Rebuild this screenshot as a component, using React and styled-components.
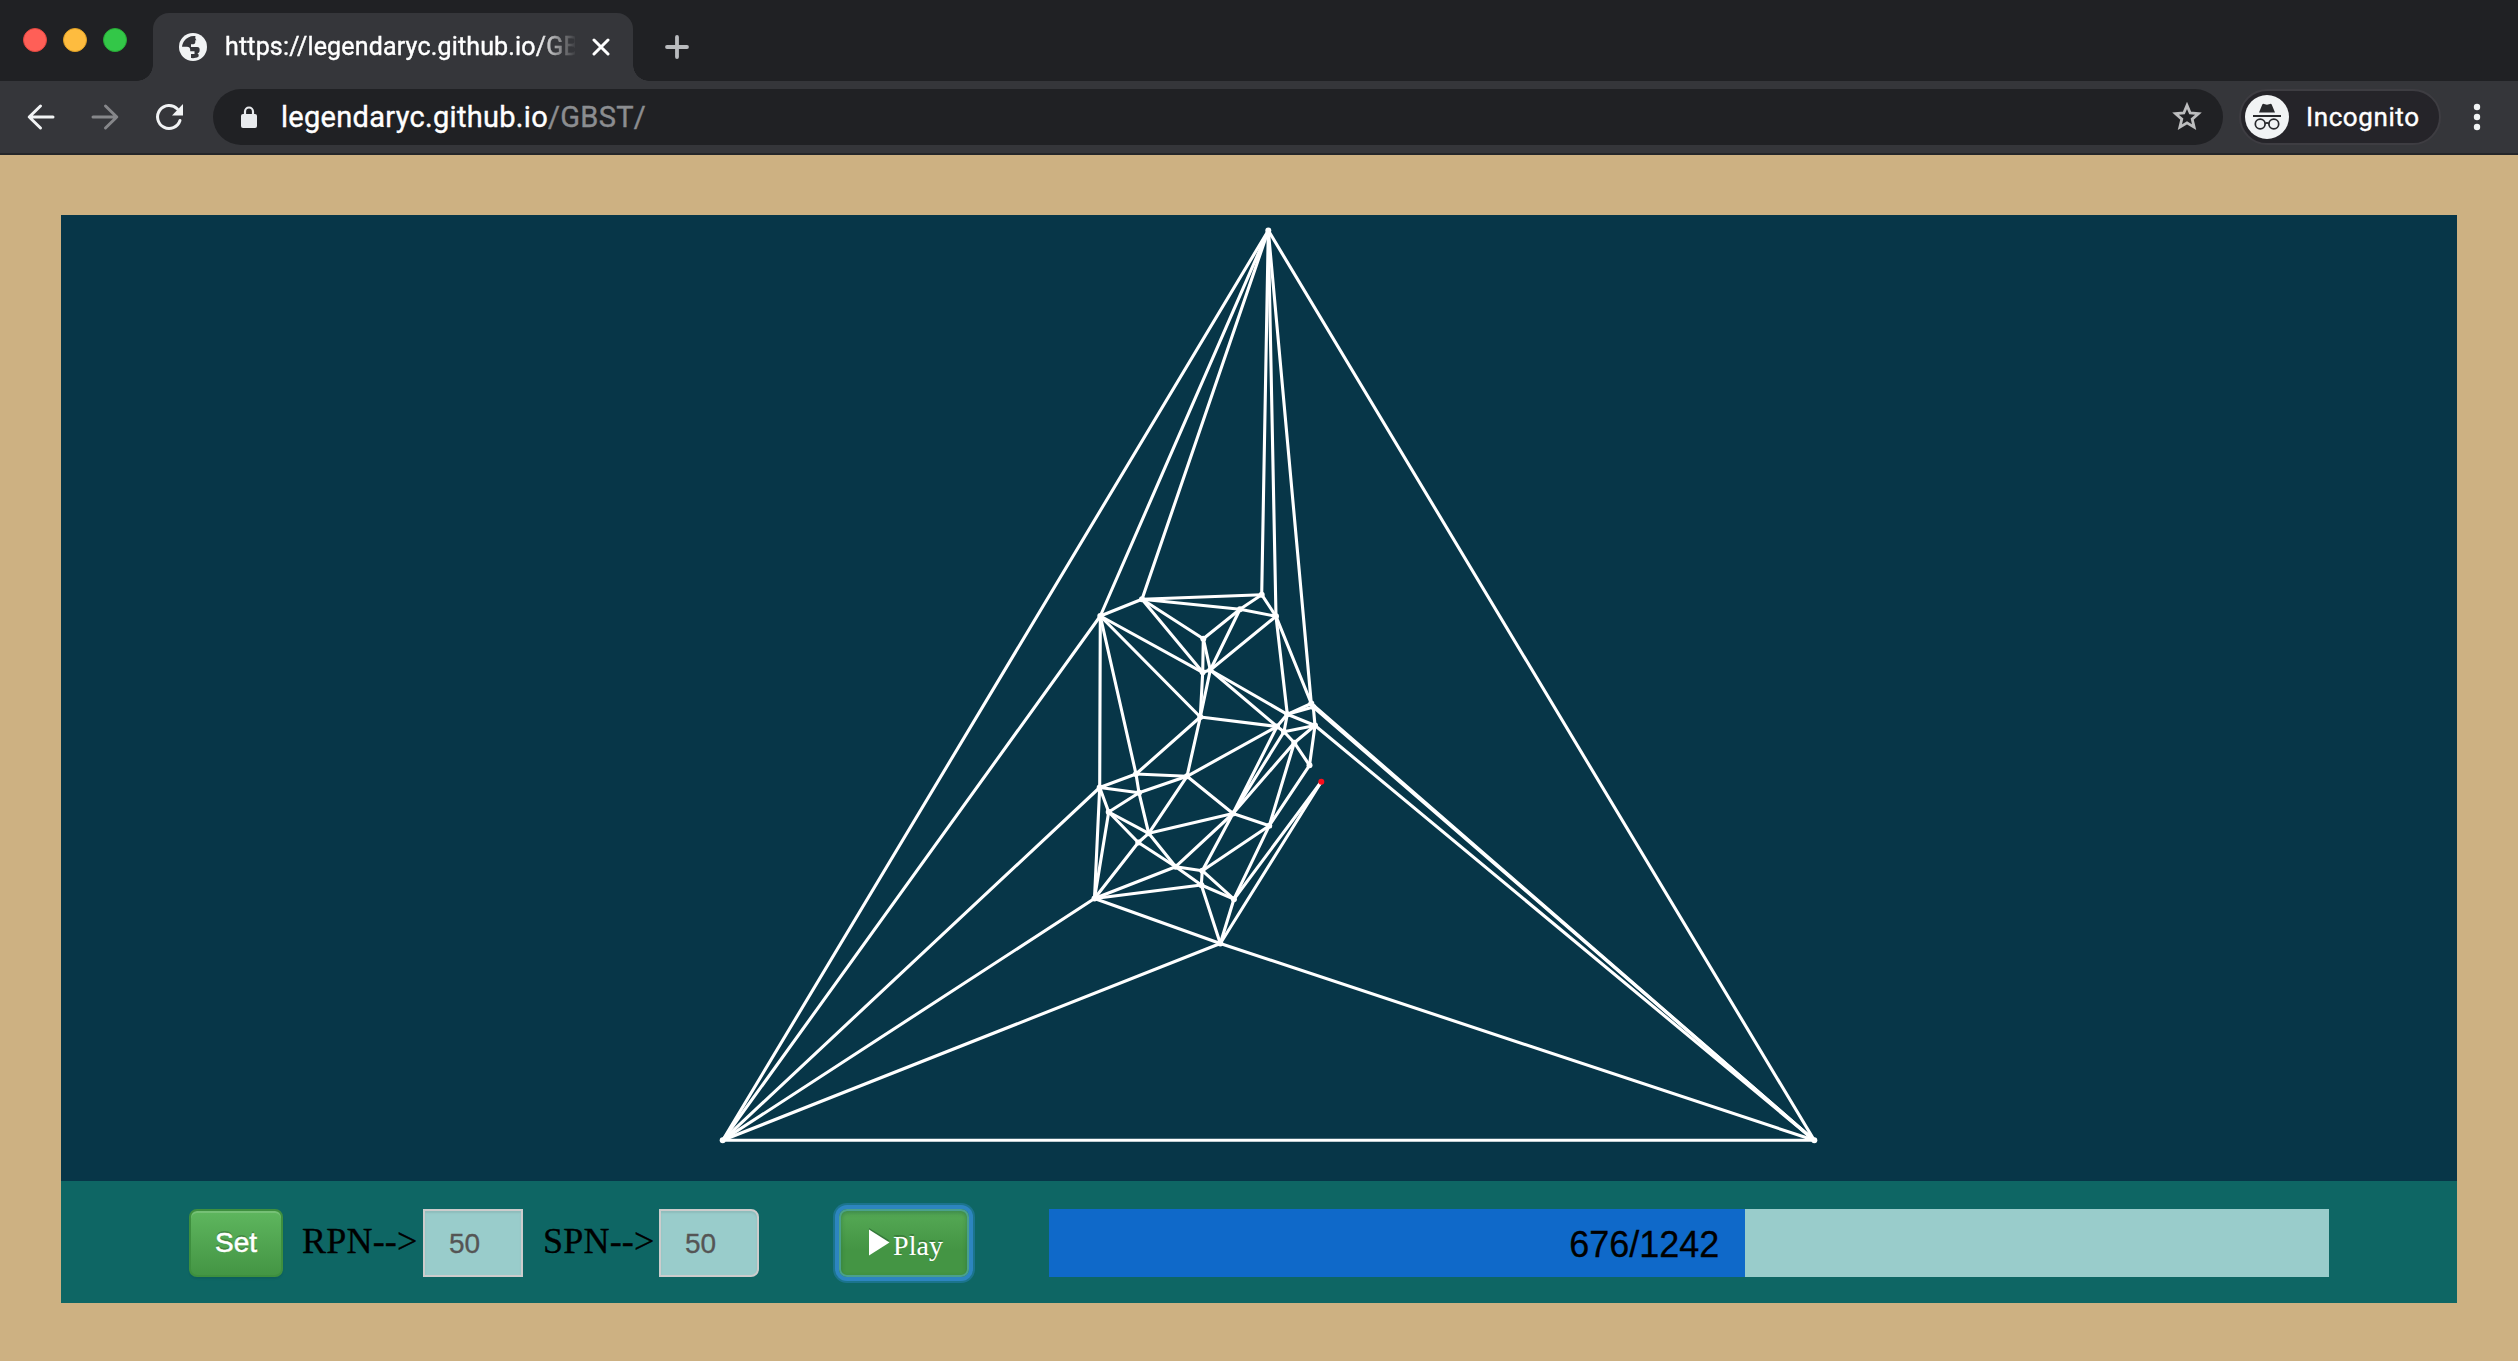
import React from "react";
import styled, { createGlobalStyle } from "styled-components";

const GlobalStyle = createGlobalStyle`
  *, *::before, *::after { box-sizing: border-box; }
  body { margin: 0; background: #cdb182; }
  svg { display: block; flex: none; }
`;

const Window = styled.div`
  width: 2518px;
  height: 1361px;
  display: flex;
  flex-direction: column;
  overflow: hidden;
  background: #cdb182;
`;

const TabStrip = styled.header`
  height: 81px;
  display: flex;
  align-items: flex-end;
  background: #202124;
  font-family: Roboto, "Liberation Sans", sans-serif;
`;

const Lights = styled.div`
  width: 153px;
  height: 81px;
  padding: 28px 0 0 23px;
  display: flex;
  gap: 16px;
`;

const Light = styled.span`
  width: 24px;
  height: 24px;
  border-radius: 50%;
  background: ${(p) => p.$fill};
  border: 1px solid ${(p) => p.$edge};
`;

const Tab = styled.div`
  position: relative;
  width: 480px;
  height: 68px;
  padding: 0 20px 0 26px;
  display: flex;
  align-items: center;
  border-radius: 16px 16px 0 0;
  background: #35363a;
  &::before, &::after {
    content: "";
    position: absolute;
    bottom: 0;
    width: 16px;
    height: 16px;
  }
  &::before {
    left: -16px;
    background: radial-gradient(circle at 0 0, #202124 15.5px, #35363a 16px);
  }
  &::after {
    right: -16px;
    background: radial-gradient(circle at 100% 0, #202124 15.5px, #35363a 16px);
  }
`;

const TabTitle = styled.span`
  width: 350px;
  margin: 0 17px 0 18px;
  overflow: hidden;
  white-space: nowrap;
  font-size: 25px;
  line-height: 34px;
  letter-spacing: 0.17px;
  color: #fff;
  -webkit-text-stroke: 0.4px currentColor;
  mask-image: linear-gradient(to right, #000 312px, transparent 352px);
`;

const NewTab = styled.div`
  width: 88px;
  height: 68px;
  display: flex;
  align-items: center;
  justify-content: center;
`;

const Toolbar = styled.nav`
  height: 74px;
  display: flex;
  align-items: center;
  padding: 0 25px 2px 24px;
  background: #35363a;
  box-shadow: inset 0 -2px 0 #252629;
  font-family: Roboto, "Liberation Sans", sans-serif;
`;

const NavIcons = styled.div`
  width: 189px;
  display: flex;
  gap: 30px;
`;

const Omnibox = styled.div`
  width: 2010px;
  height: 56px;
  padding: 0 20px 0 26px;
  display: flex;
  align-items: center;
  border-radius: 28px;
  background: #202124;
`;

const Url = styled.span`
  flex: 1;
  margin-left: 22px;
  font-size: 29px;
  line-height: 38px;
  letter-spacing: 0.3px;
  color: #fff;
  white-space: nowrap;
  -webkit-text-stroke: 0.4px currentColor;
`;

const Path = styled.span`
  color: #8b8d90;
`;

const Incognito = styled.div`
  width: 202px;
  height: 56px;
  margin: 0 20px 0 16px;
  padding: 0 0 0 4px;
  display: flex;
  align-items: center;
  gap: 17px;
  border: 2px solid #3e3d42;
  border-radius: 28px;
  background: #252429;
  color: #fff;
  font-size: 26px;
  letter-spacing: 0.6px;
  -webkit-text-stroke: 0.4px currentColor;
`;

const Page = styled.main`
  flex: 1;
  padding: 60px 61px 58px;
`;

const Board = styled.section`
  background: #073648;
`;

const Controls = styled.footer`
  height: 122px;
  display: flex;
  align-items: flex-start;
  padding: 28px 128px 0;
  background: #0e6664;
  font-family: "Liberation Sans", Arial, sans-serif;
`;

const Button = styled.button`
  width: ${(p) => p.$width}px;
  height: 68px;
  padding: 0;
  display: flex;
  align-items: center;
  justify-content: center;
  gap: 3px;
  border: 2px solid #3e8f3e;
  border-radius: 8px;
  background: linear-gradient(#5eb65e, #449544);
  box-shadow: inset 0 2px 0 rgba(255, 255, 255, 0.15), 0 2px 2px rgba(0, 0, 0, 0.075);
  color: #fff;
  font: 28px/40px "Liberation Sans", Arial, sans-serif;
  text-shadow: 0 -2px 0 rgba(0, 0, 0, 0.2);
  -webkit-text-stroke: 0.5px #fff;
`;

const PlayButton = styled(Button)`
  margin-left: 80px;
  padding-left: 4px;
  border-color: #4aa08c;
  background: linear-gradient(#55a955, #449544 60%);
  box-shadow: 0 0 0 4px #2d85bf, 0 0 0 6px rgba(45, 133, 191, 0.45), inset 0 2px 4px rgba(0, 60, 50, 0.3);
  font-family: "Liberation Serif", "Times New Roman", serif;
  -webkit-text-stroke: 0;
`;

const PlayLabel = styled.span`
  padding-top: 5px;
`;

const Label = styled.label`
  width: ${(p) => p.$width}px;
  padding-left: ${(p) => p.$indent}px;
  font: 36px/64px "Liberation Serif", "Times New Roman", serif;
  letter-spacing: 0.2px;
  white-space: nowrap;
  color: #000;
  -webkit-text-stroke: 0.3px #000;
`;

const NumberBox = styled.div`
  width: 100px;
  height: 68px;
  padding-left: 24px;
  border: 2px solid #ccc;
  border-radius: ${(p) => (p.$last ? "0 8px 8px 0" : "0")};
  background: #99cccb;
  box-shadow: inset 0 2px 2px rgba(0, 0, 0, 0.075);
  color: #555;
  font-size: 28px;
  line-height: 66px;
  -webkit-text-stroke: 0.3px #555;
`;

const Progress = styled.div`
  width: 1280px;
  height: 68px;
  margin-left: 80px;
  background: #99cccb;
`;

const ProgressFill = styled.div`
  height: 68px;
  padding-right: 26px;
  background: #0f69c9;
  color: #000;
  text-align: right;
  font-size: 36px;
  line-height: 71px;
  -webkit-text-stroke: 0.3px #000;
`;

const points = {
  T: [1268.3, 230.5], L: [722.7, 1140.3], R: [1814.3, 1140.3],
  A: [1100.3, 616], B: [1142, 599.3], C: [1261.7, 594.7], D: [1240, 609.3],
  E: [1276, 616.3], F: [1203.3, 638.7], G: [1202.7, 672.3], H: [1210.3, 670],
  I: [1200.3, 717], J: [1287.3, 714.3], K: [1311.3, 703.5], S: [1313.3, 707],
  M: [1315, 725.5], N: [1277, 726.5], O: [1284, 731.7], P: [1294.3, 742.7],
  Q: [1309.5, 765.3], U: [1136, 774], V: [1187, 776.3], W: [1099.7, 787.5],
  X: [1139, 792.8], Y: [1108.7, 812], Z: [1148.7, 833.3], a: [1138.3, 842.5],
  b: [1233, 813.5], c: [1269.3, 825.7], d: [1175.7, 866.7], e: [1202.3, 870.7],
  f: [1201.3, 885], g: [1233.9, 899.2], h: [1220.3, 943.5], i: [1094.5, 898.5],
  z: [1321.3, 781.7],
};

const edges = (
  "TL TR LR TA TB TC TE TK AL WL iL hL hR ih KR SR MR AB AW AU AI AG BC BD DE BF BG " +
  "CD DF CE DH EH FG FH GH GI HI EJ EK HJ HN IN IU IV NJ JM JK JS JO NO OM OP PM PQ MQ " +
  "KS SM NV Nb Ob Pb Pc Qc zh zg cb ce cg bV bZ bd be VU VX VZ WU WX WY Wi UX XZ XY Yi " +
  "YZ Ya Za ai Zd ad di de df ef eg fg fi fh gh"
).split(" ");

const ACTIVE = "z";
const step = 676;
const total = 1242;

function Triangulation() {
  return (
    <svg width="2396" height="966" viewBox="61 215 2396 966">
      <g stroke="#fff" strokeWidth="3.1" strokeLinecap="round">
        {edges.map(([s, t]) => (
          <line key={s + t} x1={points[s][0]} y1={points[s][1]} x2={points[t][0]} y2={points[t][1]} />
        ))}
      </g>
      {Object.entries(points).map(([id, [x, y]]) => (
        <circle key={id} cx={x} cy={y} r="3" fill={id === ACTIVE ? "#fb0d1b" : "#fff"} />
      ))}
    </svg>
  );
}

function GlobeIcon() {
  return (
    <svg width="28" height="28" viewBox="0 0 28 28">
      <circle cx="14" cy="14" r="14" fill="#f1f3f4" />
      <path
        fill="#35363a"
        d="M16.5 3.1C12 2.5 7.5 4.5 5 8.2C4 9.8 3.1 12 3 13.8H8C10 13.8 11.2 14.8 11.2 16.8V18.3H15.5V21H12V25C14 25.3 17 25.2 19.4 23.8C20 22.5 19.8 21 18.4 20.2C20 20 20.6 19 20.6 17.5V16C20.6 14.8 19.6 14 18.2 14H12V11.2H14.3C15.6 11.2 16.3 10.4 16.3 9V7.2H17.5C16.4 6 16 4.8 16.5 3.1Z"
      />
    </svg>
  );
}

function CloseIcon() {
  return (
    <svg width="18" height="18" viewBox="0 0 18 18" stroke="#fff" strokeWidth="3" strokeLinecap="round">
      <path d="M2 2L16 16M16 2L2 16" />
    </svg>
  );
}

function PlusIcon() {
  return (
    <svg width="26" height="26" viewBox="0 0 26 26" stroke="#b9bbbe" strokeWidth="3.8" strokeLinecap="round">
      <path d="M13 3V23M3 13H23" />
    </svg>
  );
}

function ArrowIcon({ color, flip }) {
  return (
    <svg width="34" height="34" viewBox="0 0 34 34" fill="none" stroke={color} strokeWidth="3" strokeLinecap="round" strokeLinejoin="round">
      <path d={flip ? "M5 17H28.5M17.5 6L28.8 17L17.5 28" : "M29 17H5.5M16.5 6L5.2 17L16.5 28"} />
    </svg>
  );
}

function ReloadIcon() {
  return (
    <svg width="34" height="34" viewBox="0 0 34 34">
      <path d="M28 20.5A11.5 11.5 0 1 1 25.4 9" fill="none" stroke="#f1f3f4" strokeWidth="3" strokeLinecap="round" />
      <path d="M31 4V15.5H20Z" fill="#f1f3f4" />
    </svg>
  );
}

function LockIcon() {
  return (
    <svg width="20" height="24" viewBox="0 0 20 24">
      <rect x="2" y="9" width="16" height="14" rx="2" fill="#e8eaed" />
      <path d="M6 10V6.5A4 4 0 0 1 14 6.5V10" fill="none" stroke="#e8eaed" strokeWidth="2.2" />
    </svg>
  );
}

function StarIcon() {
  return (
    <svg width="32" height="32" viewBox="0 0 32 32" fill="none" stroke="#bdbebf" strokeWidth="2.8">
      <path d="M16 4.4L19.2 12L27.4 12.7L21.2 18.1L23.1 26.1L16 21.8L8.9 26.1L10.8 18.1L4.6 12.7L12.8 12Z" />
    </svg>
  );
}

function IncognitoIcon() {
  return (
    <svg width="44" height="44" viewBox="0 0 44 44">
      <circle cx="22" cy="22" r="22" fill="#f1f3f4" />
      <path d="M14 17.5L17.3 9.6Q17.8 8.4 19 8.9L22 9.8L25 8.9Q26.2 8.4 26.7 9.6L30 17.5Z" fill="#28292c" />
      <path d="M8 21H36" stroke="#28292c" strokeWidth="2" />
      <g fill="none" stroke="#28292c" strokeWidth="1.7">
        <circle cx="15.2" cy="29" r="4.9" />
        <circle cx="28.8" cy="29" r="4.9" />
        <path d="M20 28.6Q22 27.2 24 28.6" />
      </g>
    </svg>
  );
}

function MenuIcon() {
  return (
    <svg width="32" height="32" viewBox="0 0 32 32" fill="#f1f3f4">
      <circle cx="16" cy="6" r="3.2" />
      <circle cx="16" cy="16" r="3.2" />
      <circle cx="16" cy="26" r="3.2" />
    </svg>
  );
}

function PlayIcon() {
  return (
    <svg width="21" height="30" viewBox="0 0 21 30">
      <path d="M0 0L20.5 12.5L0 25Z" fill="#34793a" />
      <path d="M0 1.5L20.5 14.5L0 27.5Z" fill="#fff" />
    </svg>
  );
}

export default function App() {
  return (
    <Window>
      <GlobalStyle />
      <TabStrip>
        <Lights>
          <Light $fill="#ff5f57" $edge="#e2463f" />
          <Light $fill="#febc3f" $edge="#dfa023" />
          <Light $fill="#33c748" $edge="#27aa35" />
        </Lights>
        <Tab>
          <GlobeIcon />
          <TabTitle>https://legendaryc.github.io/GBST/</TabTitle>
          <CloseIcon />
        </Tab>
        <NewTab>
          <PlusIcon />
        </NewTab>
      </TabStrip>
      <Toolbar>
        <NavIcons>
          <ArrowIcon color="#f1f3f4" />
          <ArrowIcon color="#86878a" flip />
          <ReloadIcon />
        </NavIcons>
        <Omnibox>
          <LockIcon />
          <Url>
            legendaryc.github.io<Path>/GBST/</Path>
          </Url>
          <StarIcon />
        </Omnibox>
        <Incognito>
          <IncognitoIcon />
          Incognito
        </Incognito>
        <MenuIcon />
      </Toolbar>
      <Page>
        <Board>
          <Triangulation />
          <Controls>
            <Button $width={94}>Set</Button>
            <Label $width={140} $indent={19}>RPN--&gt;</Label>
            <NumberBox>50</NumberBox>
            <Label $width={136} $indent={20}>SPN--&gt;</Label>
            <NumberBox $last>50</NumberBox>
            <PlayButton $width={130}>
              <PlayIcon />
              <PlayLabel>Play</PlayLabel>
            </PlayButton>
            <Progress>
              <ProgressFill style={{ width: `${Math.floor((step / total) * 1000) / 10}%` }}>
                {step}/{total}
              </ProgressFill>
            </Progress>
          </Controls>
        </Board>
      </Page>
    </Window>
  );
}
